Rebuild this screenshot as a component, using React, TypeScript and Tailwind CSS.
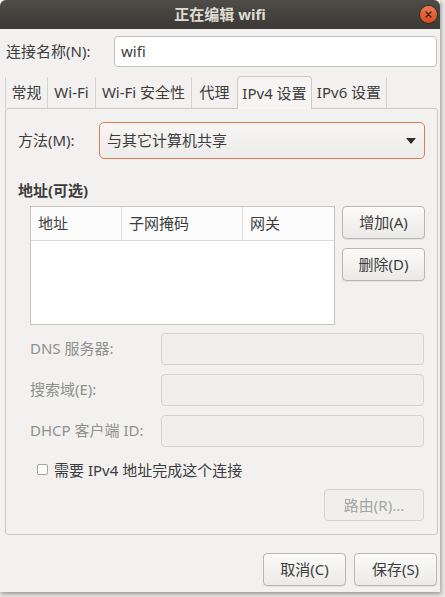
import React from 'react';

const font = "font-['Noto_Sans','Noto_Sans_CJK_SC',sans-serif]";

// Plain GTK-ish push button
const Btn = ({ label, disabled, className = '' }: { label: string; disabled?: boolean; className?: string }) => (
  <div
    className={`flex shrink-0 items-center justify-center rounded-[4px] border text-[15px] ${
      disabled
        ? 'border-[#d6d3cf] bg-[#f0efee] text-[#a4a6a3]'
        : 'border-[#b9b5b0] bg-gradient-to-b from-[#fbfbfa] to-[#ebeae8] text-[#3c3c3c] shadow-[0_1px_0_rgba(0,0,0,0.06)]'
    } ${className}`}
  >
    {label}
  </div>
);

const DisabledField = ({ label, top }: { label: string; top: string }) => (
  <div className={`flex items-center ${top}`}>
    <span className="w-[155px] shrink-0 whitespace-nowrap pl-[24px] text-[15px] text-[#8e908d]">{label}</span>
    <div className="h-[32px] w-[263px] shrink-0 rounded-[4px] border border-[#d6d3cf] bg-[#f0efee]" />
  </div>
);

const tabs = ['常规', 'Wi-Fi', 'Wi-Fi 安全性', '代理', 'IPv4 设置', 'IPv6 设置'];
const tabWidths = ['w-[43px]', 'w-[48px]', 'w-[96px]', 'w-[45px]', 'w-[75px]', 'w-[75px]'];

const App = () => {
  return (
    <div className={`h-[597px] w-[445px] overflow-hidden bg-[#e9e8e7] ${font}`}>
      <div className="flex h-[592px] w-[440px] flex-col bg-[#f2f1f0] shadow-[1px_2px_4px_rgba(0,0,0,0.35)]">
        {/* Title bar */}
        <div className="relative flex h-[29px] items-center justify-center rounded-t-[6px] bg-gradient-to-b from-[#4d4c47] to-[#3a3935]">
          <span className="text-[15px] font-bold text-[#dfdbd2]">正在编辑 wifi</span>
          <div className="absolute right-[3px] top-[6px] flex h-[17px] w-[17px] items-center justify-center rounded-full bg-gradient-to-b from-[#f07a4c] to-[#d9481b] shadow-[0_0_0_1px_rgba(0,0,0,0.25)]">
            <svg width="7" height="7" viewBox="0 0 7 7">
              <path d="M1 1L6 6M6 1L1 6" stroke="#3a2018" strokeWidth="1.4" strokeLinecap="round" />
            </svg>
          </div>
        </div>

        {/* Connection name */}
        <div className="mt-[7px] flex items-center">
          <span className="w-[114px] shrink-0 pl-[6px] text-[15px] text-[#3c3c3c]">连接名称(N):</span>
          <div className="flex h-[31px] w-[323px] shrink-0 items-center rounded-[4px] border border-[#c3bfba] bg-white pl-[6px] text-[15px] text-[#3c3c3c]">
            wifi
          </div>
        </div>

        {/* Tabs */}
        <div className="mt-[8px] flex h-[33px] items-end pl-[5px]">
          {tabs.map((t, i) =>
            i === 4 ? (
              <div
                key={t}
                className={`relative z-10 -mb-px flex h-[33px] ${tabWidths[i]} items-center justify-center rounded-t-[4px] border border-b-0 border-[#cdc9c5] bg-[#f6f5f4] text-[15px] text-[#3c3c3c]`}
              >
                {t}
              </div>
            ) : (
              <div
                key={t}
                className={`flex h-[31px] ${tabWidths[i]} items-center justify-center border-r border-[#d6d3cf] text-[15px] text-[#3c3c3c] ${i === 0 ? 'border-l' : ''} ${i === 3 ? 'border-r-0' : ''}`}
              >
                {t}
              </div>
            )
          )}
        </div>

        {/* Panel */}
        <div className="mx-[5px] flex h-[427px] w-[433px] flex-col rounded-[3px] border border-[#cdc9c5] bg-[#f2f1f0]">
          <div className="mt-[13px] flex items-center">
            <span className="w-[93px] shrink-0 pl-[12px] text-[15px] text-[#3c3c3c]">方法(M):</span>
            <div className="flex h-[37px] w-[326px] shrink-0 items-center justify-between rounded-[5px] border border-[#e07a52] bg-gradient-to-b from-[#f7f6f5] to-[#edecea] pl-[7px] pr-[8px] text-[15px] text-[#3c3c3c]">
              与其它计算机共享
              <svg width="10" height="6" viewBox="0 0 10 6">
                <path d="M0 0H10L5 6Z" fill="#2e2e2e" />
              </svg>
            </div>
          </div>

          <div className="mt-[20px] pl-[12px] text-[15px] font-bold text-[#3c3c3c]">地址(可选)</div>

          <div className="mt-[4px] flex pl-[24px]">
            <div className="h-[119px] w-[305px] shrink-0 border border-[#c7c4c0] bg-white">
              <div className="flex h-[34px] border-b border-[#dcdad7] bg-[#fcfcfc] text-[15px] text-[#3c3c3c]">
                <div className="flex w-[91px] items-center border-r border-[#e0dedb] pl-[7px]">地址</div>
                <div className="flex w-[121px] items-center border-r border-[#e0dedb] pl-[7px]">子网掩码</div>
                <div className="flex flex-1 items-center pl-[7px]">网关</div>
              </div>
            </div>
            <div className="ml-[7px] flex flex-col gap-[9px]">
              <Btn label="增加(A)" className="h-[33px] w-[83px]" />
              <Btn label="删除(D)" className="h-[33px] w-[83px]" />
            </div>
          </div>

          <DisabledField label="DNS 服务器:" top="mt-[8px]" />
          <DisabledField label="搜索域(E):" top="mt-[9px]" />
          <DisabledField label="DHCP 客户端 ID:" top="mt-[9px]" />

          <div className="mt-[12px] flex items-center pl-[31px]">
            <div className="h-[11px] w-[11px] rounded-[2px] border border-[#a8a5a1] bg-white" />
            <span className="ml-[6px] text-[15px] text-[#3c3c3c]">需要 IPv4 地址完成这个连接</span>
          </div>

          <div className="mt-[8px] flex justify-end pr-[13px]">
            <Btn label="路由(R)..." disabled className="h-[32px] w-[100px]" />
          </div>
        </div>

        {/* Dialog buttons */}
        <div className="mt-[18px] flex justify-end gap-[8px] pr-[3px]">
          <Btn label="取消(C)" className="h-[33px] w-[83px]" />
          <Btn label="保存(S)" className="h-[33px] w-[83px]" />
        </div>
      </div>
    </div>
  );
};

export default App;
